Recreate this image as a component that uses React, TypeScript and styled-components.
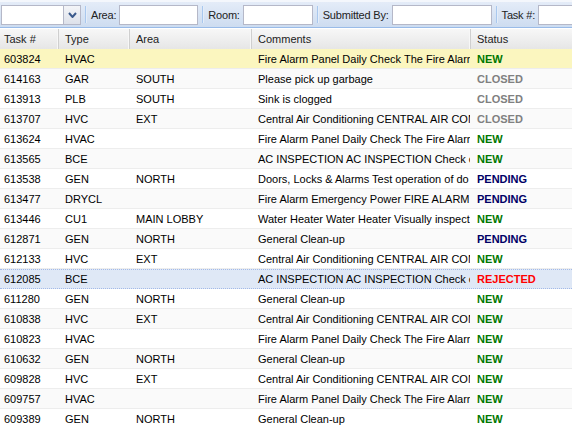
import React from "react";
import styled, { createGlobalStyle } from "styled-components";

const Global = createGlobalStyle`
  html, body { margin: 0; padding: 0; background: #fff; overflow: hidden; }
  body { font-family: "Liberation Sans", Arial, sans-serif; font-size: 11px; color: #000; }
`;
const Page = styled.div`width: 572px; height: 428px; overflow: hidden; background: #fff;`;
const Toolbar = styled.div`
  height: 28px; box-sizing: border-box; display: flex; align-items: center;
  padding: 0 0 0 1px; white-space: nowrap;
  background: linear-gradient(#e4ecf8, #cddcf0);
  border-top: 2px solid #f4f7fc; border-bottom: 1px solid #99bbe8;
`;
const Field = styled.input<{ $w: number }>`
  width: ${p => p.$w}px; height: 20px; box-sizing: border-box; flex: none; padding: 0 3px;
  border: 1px solid #b5b8c8; background: #fff; margin: 0; outline: none; border-radius: 0;
`;
const Trigger = styled.div`
  width: 17px; height: 20px; box-sizing: border-box; flex: none; display: flex; align-items: center; justify-content: center;
  border: 1px solid #b5b8c8; border-left: none; background: linear-gradient(#f4f5f8, #dde1ea);
`;
const Sep = styled.span`width: 1px; height: 17px; flex: none; margin: 0 5px 0 4px; background: #a9c8ee; box-shadow: 1px 0 0 #e4edf9;`;
const Label = styled.label`font-size: 11px; letter-spacing: -0.2px; color: #222; margin-right: 3px; flex: none;`;
const Head = styled.div`
  display: grid; grid-template-columns: 59px 71px 122px 219px 101px; height: 21px; box-sizing: border-box;
  border-top: 1px solid #fff;
  background: linear-gradient(#f7f7f7, #e6e6e6);
`;
const HeadCell = styled.div`
  box-sizing: border-box; padding: 0 0 0 6px; line-height: 20px; font-size: 11px; color: #222;
  border-right: 1px solid #cfcfcf; box-shadow: inset -1px 0 0 #f7f7f7;
  &:first-child { padding-left: 4px; }
  &:last-child { border-right: none; box-shadow: none; }
`;
const Row = styled.div<{ $bg: string; $sel?: boolean }>`
  display: grid; grid-template-columns: 59px 71px 122px 219px 101px; height: 20px; box-sizing: border-box;
  background: ${p => p.$bg}; line-height: 20px;
  border-bottom: 1px solid #ededed;
  ${p => p.$sel ? "border-top: 1px dotted #a3bae9; border-bottom: 1px dotted #a3bae9; line-height: 18px;" : ""}
`;
const Cell = styled.div`
  padding-left: 6px; overflow: hidden; white-space: nowrap; font-size: 11px;
  &:first-child { padding-left: 4px; }
  &:nth-child(4) { margin-right: 1px; }
`;
const Status = styled.div<{ $c: string }>`
  padding-left: 6px; font-size: 11px; font-weight: bold; color: ${p => p.$c}; white-space: nowrap;
`;

const FA = "Fire Alarm Panel Daily Check The Fire Alarm";
const AC = "AC INSPECTION AC INSPECTION Check o";
const CE = "Central Air Conditioning CENTRAL AIR CON";
const GC = "General Clean-up";
const colors: Record<string, string> = { NEW: "#007700", CLOSED: "#808080", PENDING: "#000066", REJECTED: "#ff0000" };
type R = [string, string, string, string, string];
const rows: R[] = [
  ["603824", "HVAC", "", FA, "NEW"],
  ["614163", "GAR", "SOUTH", "Please pick up garbage", "CLOSED"],
  ["613913", "PLB", "SOUTH", "Sink is clogged", "CLOSED"],
  ["613707", "HVC", "EXT", CE, "CLOSED"],
  ["613624", "HVAC", "", FA, "NEW"],
  ["613565", "BCE", "", AC, "NEW"],
  ["613538", "GEN", "NORTH", "Doors, Locks & Alarms Test operation of do", "PENDING"],
  ["613477", "DRYCL", "", "Fire Alarm Emergency Power FIRE ALARM", "PENDING"],
  ["613446", "CU1", "MAIN LOBBY", "Water Heater Water Heater Visually inspect", "NEW"],
  ["612871", "GEN", "NORTH", GC, "PENDING"],
  ["612133", "HVC", "EXT", CE, "NEW"],
  ["612085", "BCE", "", AC, "REJECTED"],
  ["611280", "GEN", "NORTH", GC, "NEW"],
  ["610838", "HVC", "EXT", CE, "NEW"],
  ["610823", "HVAC", "", FA, "NEW"],
  ["610632", "GEN", "NORTH", GC, "NEW"],
  ["609828", "HVC", "EXT", CE, "NEW"],
  ["609757", "HVAC", "", FA, "NEW"],
  ["609389", "GEN", "NORTH", GC, "NEW"],
];
const bgFor = (i: number) => i === 0 ? "#fbf6bf" : i === 11 ? "#dfe8f6" : i % 2 === 1 ? "#fafafa" : "#ffffff";

export default function App() {
  return (
    <Page>
      <Global />
      <Toolbar>
        <Field $w={63} />
        <Trigger>
          <svg width="9" height="6" viewBox="0 0 9 6"><path d="M1 1l3.5 4L8 1" fill="none" stroke="#3b5a8c" strokeWidth="2" /></svg>
        </Trigger>
        <Sep />
        <Label>Area:</Label>
        <Field $w={79} />
        <Sep />
        <Label>Room:</Label>
        <Field $w={70} />
        <Sep />
        <Label>Submitted By:</Label>
        <Field $w={100} />
        <Sep />
        <Label>Task #:</Label>
        <Field $w={60} />
      </Toolbar>
      <Head>
        {["Task #", "Type", "Area", "Comments", "Status"].map(h => <HeadCell key={h}>{h}</HeadCell>)}
      </Head>
      {rows.map((r, i) => (
        <Row key={r[0]} $bg={bgFor(i)} $sel={i === 11}>
          <Cell>{r[0]}</Cell>
          <Cell>{r[1]}</Cell>
          <Cell>{r[2]}</Cell>
          <Cell>{r[3]}</Cell>
          <Status $c={colors[r[4]]}>{r[4]}</Status>
        </Row>
      ))}
    </Page>
  );
}
